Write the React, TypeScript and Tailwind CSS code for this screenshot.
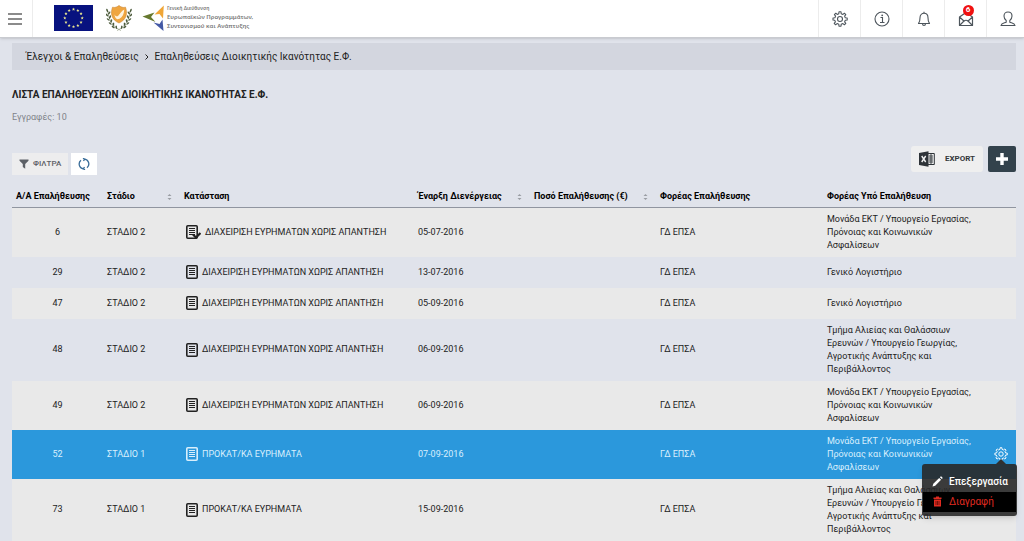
import React from 'react';

const columns = [
  { label: 'Α/Α Επαλήθευσης', width: 'w-[91px]', sortable: false },
  { label: 'Στάδιο', width: 'w-[77px]', sortable: true },
  { label: 'Κατάσταση', width: 'w-[234px]', sortable: false },
  { label: 'Έναρξη Διενέργειας', width: 'w-[116px]', sortable: true },
  { label: 'Ποσό Επαλήθευσης (€)', width: 'w-[126px]', sortable: true },
  { label: 'Φορέας Επαλήθευσης', width: 'w-[167px]', sortable: false },
  { label: 'Φορέας Υπό Επαλήθευση', width: 'w-[163px]', sortable: false },
];

const NO_ANSWER = 'ΔΙΑΧΕΙΡΙΣΗ ΕΥΡΗΜΑΤΩΝ ΧΩΡΙΣ ΑΠΑΝΤΗΣΗ';
const FINDINGS = 'ΠΡΟΚΑΤ/ΚΑ ΕΥΡΗΜΑΤΑ';
const LABOUR = 'Μονάδα ΕΚΤ / Υπουργείο Εργασίας, Πρόνοιας και Κοινωνικών Ασφαλίσεων';
const FISHERIES = 'Τμήμα Αλιείας και Θαλάσσιων Ερευνών / Υπουργείο Γεωργίας, Αγροτικής Ανάπτυξης και Περιβάλλοντος';
const TREASURY = 'Γενικό Λογιστήριο';

const rows = [
  { id: 6, stage: 'ΣΤΑΔΙΟ 2', status: NO_ANSWER, date: '05-07-2016', body: LABOUR, checked: true },
  { id: 29, stage: 'ΣΤΑΔΙΟ 2', status: NO_ANSWER, date: '13-07-2016', body: TREASURY },
  { id: 47, stage: 'ΣΤΑΔΙΟ 2', status: NO_ANSWER, date: '05-09-2016', body: TREASURY },
  { id: 48, stage: 'ΣΤΑΔΙΟ 2', status: NO_ANSWER, date: '06-09-2016', body: FISHERIES },
  { id: 49, stage: 'ΣΤΑΔΙΟ 2', status: NO_ANSWER, date: '06-09-2016', body: LABOUR },
  { id: 52, stage: 'ΣΤΑΔΙΟ 1', status: FINDINGS, date: '07-09-2016', body: LABOUR, selected: true },
  { id: 73, stage: 'ΣΤΑΔΙΟ 1', status: FINDINGS, date: '15-09-2016', body: FISHERIES },
];

const STAR = 'M0 -1.7 L.45 -.55 L1.6 -.5 L.7 .22 L1 1.4 L0 .75 L-1 1.4 L-.7 .22 L-1.6 -.5 L-.45 -.55Z';

const EuFlag = () => (
  <svg viewBox="0 0 39 26" className="h-[26px] w-[39px]" aria-label="Ευρωπαϊκή Ένωση">
    <rect width="39" height="26" fill="#07127f" />
    {Array.from({ length: 12 }, (_, i) => {
      const a = (i * Math.PI) / 6;
      return (
        <path key={i} d={STAR} fill="#f0ec90" transform={`translate(${19.5 + 8.7 * Math.sin(a)} ${13 - 8.7 * Math.cos(a)})`} />
      );
    })}
  </svg>
);

const CyprusArms = () => (
  <svg viewBox="0 0 26 28" className="h-7 w-[26px]" aria-label="Κυπριακή Δημοκρατία">
    <g fill="none" stroke="#7d8a6a" strokeWidth=".6">
      <path d="M2 7C2 15 7 23 15 26.500" />
      <path d="M24 7C24 15 19 23 11 26.500" />
    </g>
    <g fill="#4c5b3c">
      {[
        [1.2, 6.5, 20], [3.2, 9, -35], [.9, 11, 45], [4, 13, -30], [2.2, 15.5, 50], [5.3, 17, -20],
        [4.2, 19.5, 50], [7.4, 20.3, -10], [7.2, 23, 55], [10.3, 23.3, 5],
      ].map(([x, y, r]) => (
        <g key={y + x}>
          <ellipse rx=".8" ry="1.800" transform={`translate(${x} ${y}) rotate(${-r})`} />
          <ellipse rx=".8" ry="1.800" transform={`translate(${26 - x} ${y}) rotate(${r})`} />
        </g>
      ))}
    </g>
    <path d="M6.500 3.200C9 4 11 3 13 1.500c2 1.500 4 2.500 6.500 1.700C21.500 9 21 15.500 13 19 5 15.500 4.500 9 6.500 3.200Z" fill="#efa540" stroke="#c98733" strokeWidth=".6" />
    <path d="M8.500 10.500c1 2 2.500 2 3.500 1.500C14 9.500 15.500 7 18.300 5.500c-.3 4.500-1.800 7.500-4.800 9.200l-2.300.6c-1.500-1-2.500-2.500-2.700-4.800Z" fill="#fff3dd" />
  </svg>
);

const DirectorateMark = () => (
  <svg viewBox="0 0 24 28" className="h-7 w-6" aria-hidden="true">
    <path d="M21.800 1.500 12.500 10.500l5-.5L21 14.500Z" fill="#f0a637" />
    <path d="M.5 12.500 12.500 8.500 9 13l4.500 5Z" fill="#66782e" />
    <path d="M21.500 27 20.500 15.500l-3 4.500-6-1.500Z" fill="#4459a5" />
  </svg>
);

const GearIcon = ({ className }: { className?: string }) => (
  <svg viewBox="0 0 16 16" className={className} fill="none" stroke="currentColor" strokeWidth="1.100" strokeLinejoin="round" aria-hidden="true">
    <path d="M6.800 2.700 7 .8h2l.2 1.900 1.700.7 1.500-1.200 1.400 1.400-1.200 1.500.7 1.700 1.900.2v2l-1.900.2-.7 1.700 1.200 1.500-1.400 1.400-1.500-1.200-1.700.7-.2 1.900H7l-.2-1.900-1.700-.7-1.500 1.200-1.400-1.400 1.200-1.500-.7-1.700L1 9V7l1.900-.2.7-1.700-1.200-1.500 1.400-1.400 1.500 1.200Z" />
    <circle cx="8" cy="8" r="2.500" />
  </svg>
);

const InfoIcon = () => (
  <svg viewBox="0 0 16 16" className="size-4" fill="none" stroke="currentColor" strokeWidth="1.100" aria-hidden="true">
    <circle cx="8" cy="8" r="7" />
    <path d="M6.500 6.500h2v5M6 11.500h4.500" />
    <circle cx="8.200" cy="4.300" r=".9" fill="currentColor" stroke="none" />
  </svg>
);

const BellIcon = () => (
  <svg viewBox="0 0 16 16" className="size-4" fill="none" stroke="currentColor" strokeWidth="1.100" strokeLinejoin="round" aria-hidden="true">
    <path d="M2.500 12.500C4 11 4 9.500 4 6.800 4 4 5.700 2.300 8 2.300S12 4 12 6.800c0 2.700 0 4.200 1.500 5.700Z" />
    <path d="M8 2.300V.8M6.500 12.800c0 1 .6 1.700 1.500 1.700s1.500-.7 1.500-1.700" />
  </svg>
);

const MailIcon = () => (
  <svg viewBox="0 0 16 16" className="size-4" fill="none" stroke="currentColor" strokeWidth="1.200" strokeLinejoin="round" aria-hidden="true">
    <path d="M1.500 6 8 1.500 14.500 6v8.500h-13ZM1.500 6l5 4.500M14.500 6l-5 4.500M1.500 14.500 6 10Q8 8.500 10 10l4.500 4.500" />
  </svg>
);

const UserIcon = () => (
  <svg viewBox="0 0 16 16" className="size-4" fill="none" stroke="currentColor" strokeWidth="1.100" strokeLinejoin="round" aria-hidden="true">
    <path d="M6.200 9.500C4.700 8.300 4 6.800 4 5c0-2.400 1.600-4 4-4s4 1.600 4 4c0 1.800-.7 3.300-2.200 4.500v1.700c1.700.9 4.700.8 5.200 3.300H1c.5-2.500 3.500-2.400 5.200-3.300Z" />
  </svg>
);

const SheetIcon = ({ checked }: { checked?: boolean }) => (
  <svg viewBox={checked ? '0 0 15 14' : '0 0 12 14'} className={checked ? 'h-3.5 w-[15px] shrink-0' : 'h-3.5 w-3 shrink-0'} fill="none" stroke="currentColor" aria-hidden="true">
    <rect x=".8" y=".8" width="10.400" height="12.400" rx="1" strokeWidth="1.600" />
    <path d="M3 3.500h6M3 5.500h6M3 7.500h6M3 9.500h6" />
    {checked && <path d="m7 9.500 3 3L14.500 8" strokeWidth="2.200" />}
  </svg>
);

const SortIcon = () => (
  <svg viewBox="0 0 5 8" className="h-2 w-[5px] shrink-0" fill="#9a9da3" aria-hidden="true">
    <path d="M.5 3 2.500 1 4.500 3ZM.5 5l2 2 2-2Z" />
  </svg>
);

const FilterIcon = () => (
  <svg viewBox="0 0 10 10" className="size-2.5" fill="currentColor" aria-hidden="true">
    <path d="M.5 .5h9v1.300L6.200 5v4.700L3.800 8V5L.5 1.800Z" />
  </svg>
);

const RefreshIcon = () => (
  <svg viewBox="0 0 12 12" className="size-3" fill="none" stroke="currentColor" strokeWidth="1.300" aria-hidden="true">
    <path d="M5.300 10.800A4.800 4.800 0 0 1 3 2.300M6.700 1.200A4.800 4.800 0 0 1 9 9.700" />
    <path d="M5 .2 6.700 1.200 5.500 3M7 11.800 5.300 10.800 6.500 9" />
  </svg>
);

const ExcelIcon = () => (
  <svg viewBox="0 0 16 16" className="size-4" aria-hidden="true">
    <path d="M9 2.500h6.300v11H9" fill="none" stroke="#2e3338" />
    <path d="M10 5h4M10 7h4M10 9h4M10 11h4M12 3v10" stroke="#2e3338" strokeWidth=".9" />
    <path d="M0 2 9.500.3v15.400L0 14Z" fill="#2e3338" />
    <path d="m2.700 5 4 6M6.700 5l-4 6" stroke="#f2f2f2" strokeWidth="1.400" />
  </svg>
);

const PencilIcon = () => (
  <svg viewBox="0 0 11 11" className="size-[11px]" fill="#fff" aria-hidden="true">
    <path d="M.5 10.500 1.300 7.800 7.200 1.900l1.900 1.900-5.900 5.900ZM7.900 1.200 8.500.6c.3-.3.700-.3 1 0l.9.9c.3.3.3.700 0 1l-.6.6Z" />
  </svg>
);

const TrashIcon = () => (
  <svg viewBox="0 0 11 11" className="size-[11px]" aria-hidden="true">
    <path d="M1.500 1.500H4V.5h3v1h2.500V3h-8ZM2 3.500h7V10.500H2Z" fill="#e02b20" />
    <path d="M4 5v4M5.500 5v4M7 5v4" stroke="#4a0703" strokeWidth=".7" />
  </svg>
);

const RowMenu = () => (
  <div className="absolute top-[34px] -right-px z-10 w-[95px] rounded-[3px] bg-[#282828]/90 pt-2 pb-1 shadow-md">
    <svg viewBox="0 0 10 5" className="absolute -top-[5px] right-[11px] h-[5px] w-2.5" aria-hidden="true">
      <path d="M0 5 5 0l5 5Z" fill="#303030" />
    </svg>
    <button type="button" className="flex h-5 w-full items-center gap-1.5 pl-2.5 text-[10px] font-medium text-white">
      <PencilIcon />
      Επεξεργασία
    </button>
    <button type="button" className="mx-px flex h-5 w-[93px] items-center gap-1.5 bg-black pl-[9px] text-[10px] text-[#e02b20]">
      <TrashIcon />
      Διαγραφή
    </button>
  </div>
);

const Header = () => (
  <header className="flex h-[38px] items-stretch justify-between border-b border-[#c9cbd0] bg-white shadow-sm">
    <div className="flex items-stretch">
      <button type="button" aria-label="Μενού" className="flex w-[33px] items-center border-r border-[#ececec] pl-2 text-[#666]">
        <svg viewBox="0 0 14 12" className="h-3 w-3.5" stroke="currentColor" strokeWidth="1.300">
          <path d="M0 1h14M0 6h14M0 11h14" />
        </svg>
      </button>
      <div className="flex items-center pb-0.5 pl-[21px]">
        <EuFlag />
        <span className="ml-[13px]"><CyprusArms /></span>
        <span className="ml-2.5"><DirectorateMark /></span>
        <div className="ml-px font-['Noto_Sans',sans-serif] text-[6px] leading-[9px] font-semibold text-[#777]">
          <p className="text-[5px]">Γενική Διεύθυνση</p>
          <p>Ευρωπαϊκών Προγραμμάτων,</p>
          <p>Συντονισμού και Ανάπτυξης</p>
        </div>
      </div>
    </div>
    <nav className="flex items-stretch text-[#4d555c] *:flex *:w-[42px] *:items-center *:justify-center *:border-l *:border-[#ececec]">
      <button type="button" aria-label="Ρυθμίσεις"><GearIcon className="size-4" /></button>
      <button type="button" aria-label="Πληροφορίες"><InfoIcon /></button>
      <button type="button" aria-label="Ειδοποιήσεις"><BellIcon /></button>
      <button type="button" aria-label="Μηνύματα">
        <span className="relative">
          <MailIcon />
          <span className="absolute -top-1.5 left-[5px] flex size-[11px] items-center justify-center rounded-full bg-[#f01010] text-[8px] font-bold text-white">6</span>
        </span>
      </button>
      <button type="button" aria-label="Χρήστης" className="-mr-1"><UserIcon /></button>
    </nav>
  </header>
);

const VerificationsTable = () => (
  <table className="mt-3 w-full table-fixed border-collapse text-[9px] leading-[13px] text-[#222]">
    <thead>
      <tr className="h-5 border-b border-[#9095a0] text-left text-black">
        {columns.map((col) => (
          <th key={col.label} scope="col" className={`${col.width} px-1 font-bold whitespace-nowrap`}>
            {col.sortable ? (
              <span className="flex items-center justify-between pr-1">
                {col.label}
                <SortIcon />
              </span>
            ) : (
              col.label
            )}
          </th>
        ))}
        <th className="w-[30px]" aria-label="Ενέργειες" />
      </tr>
    </thead>
    <tbody>
      {rows.map((row) => (
        <tr
          key={row.id}
          className={row.selected ? 'bg-[#2b98dc] text-[#d9effc]' : 'odd:bg-[#e9e9e9]'}
        >
          <td className="h-[31px] px-1 py-[5px] text-center">{row.id}</td>
          <td className="px-1">{row.stage}</td>
          <td className="px-1">
            <span className="flex items-center gap-1 pl-0.5 whitespace-nowrap">
              <SheetIcon checked={row.checked} />
              {row.status}
            </span>
          </td>
          <td className="px-1">{row.date}</td>
          <td />
          <td className="px-1">ΓΔ ΕΠΣΑ</td>
          <td className="px-1 py-[5px]">{row.body}</td>
          <td className="relative">
            {row.selected && (
              <>
                <button type="button" aria-label="Ενέργειες" className="flex w-full justify-center text-white">
                  <GearIcon className="size-3.5" />
                </button>
                <RowMenu />
              </>
            )}
          </td>
        </tr>
      ))}
    </tbody>
  </table>
);

export default function App() {
  return (
    <div className="min-h-screen overflow-x-hidden bg-[#e0e3eb] font-[Roboto,'Noto_Sans',sans-serif] text-[#222]">
      <Header />
      <main className="pt-[5px] pr-2 pl-3">
        <nav aria-label="Διαδρομή" className="flex h-[27px] items-center gap-1.5 bg-[#d3d6df] px-3.5 text-[10px]">
          <a href="#checks">Έλεγχοι &amp; Επαληθεύσεις</a>
          <svg viewBox="0 0 4 6" className="h-1.5 w-1" fill="none" stroke="currentColor" aria-hidden="true">
            <path d="m.5 .5 2.500 2.500L.5 5.500" />
          </svg>
          <a href="#capacity">Επαληθεύσεις Διοικητικής Ικανότητας Ε.Φ.</a>
        </nav>
        <h1 className="mt-4 text-[10px] leading-[18px] font-bold">ΛΙΣΤΑ ΕΠΑΛΗΘΕΥΣΕΩΝ ΔΙΟΙΚΗΤΙΚΗΣ ΙΚΑΝΟΤΗΤΑΣ Ε.Φ.</h1>
        <p className="mt-1 text-[9px] leading-[18px] text-[#80838a]">Εγγραφές: 10</p>
        <div className="mt-5 flex items-end justify-between">
          <div className="flex gap-[3px]">
            <button type="button" className="flex h-[22px] items-center gap-1 bg-[#ededee] px-[7px] text-[8px] font-medium text-[#5c6066]">
              <FilterIcon />
              ΦΙΛΤΡΑ
            </button>
            <button type="button" aria-label="Ανανέωση" className="flex h-[22px] w-[26px] items-center justify-center bg-white text-[#3a6d99]">
              <RefreshIcon />
            </button>
          </div>
          <div className="mb-[3px] flex gap-[5px]">
            <button type="button" className="flex h-[26px] items-center gap-2.5 rounded-[3px] bg-[#efefef] px-2 text-[8px] font-bold text-[#33373b]">
              <ExcelIcon />
              EXPORT
            </button>
            <button type="button" aria-label="Προσθήκη" className="flex h-[26px] w-7 items-center justify-center rounded-[2px] bg-[#33424c] text-white">
              <svg viewBox="0 0 12 12" className="size-3" fill="currentColor">
                <path d="M4.300 0h3.400v4.300H12v3.400H7.700V12H4.300V7.700H0V4.300h4.300Z" />
              </svg>
            </button>
          </div>
        </div>
        <VerificationsTable />
      </main>
    </div>
  );
}
